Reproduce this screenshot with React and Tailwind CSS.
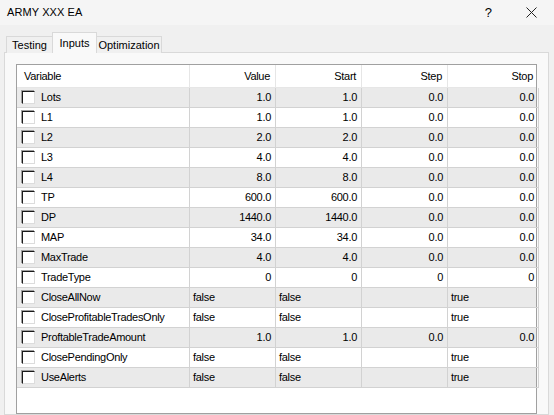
import React from "react";

const rows = [
  ["Lots", "1.0", "1.0", "0.0", "0.0"],
  ["L1", "1.0", "1.0", "0.0", "0.0"],
  ["L2", "2.0", "2.0", "0.0", "0.0"],
  ["L3", "4.0", "4.0", "0.0", "0.0"],
  ["L4", "8.0", "8.0", "0.0", "0.0"],
  ["TP", "600.0", "600.0", "0.0", "0.0"],
  ["DP", "1440.0", "1440.0", "0.0", "0.0"],
  ["MAP", "34.0", "34.0", "0.0", "0.0"],
  ["MaxTrade", "4.0", "4.0", "0.0", "0.0"],
  ["TradeType", "0", "0", "0", "0"],
  ["CloseAllNow", "false", "false", "", "true"],
  ["CloseProfitableTradesOnly", "false", "false", "", "true"],
  ["ProftableTradeAmount", "1.0", "1.0", "0.0", "0.0"],
  ["ClosePendingOnly", "false", "false", "", "true"],
  ["UseAlerts", "false", "false", "", "true"],
];

const isText = (v) => v === "false" || v === "true";

function Check() {
  return (
    <span className="inline-block w-[13px] h-[13px] bg-white border border-t-[#1a1a1a] border-l-[#1a1a1a] border-r-[#dcdcdc] border-b-[#dcdcdc] shadow-[-1px_-1px_0_#a0a0a0]" />
  );
}

export default function App() {
  return (
    <div className="w-[554px] h-[415px] overflow-hidden bg-[#f0f0f0] text-black text-[11px] font-['Liberation_Sans',Arial,sans-serif] flex flex-col">
      {/* title bar */}
      <div className="h-[25px] bg-[#f5f5f5] flex items-center pl-[7px] shrink-0">
        <span className="text-[11px] tracking-[0.1px]">ARMY XXX EA</span>
        <div className="ml-auto flex items-center">
          <span className="text-[13px] mr-[34px]">?</span>
          <svg width="11" height="11" viewBox="0 0 11 11" className="mr-[17px]">
            <path d="M0.5 0.5L10.5 10.5M10.5 0.5L0.5 10.5" stroke="#222" strokeWidth="1" fill="none" />
          </svg>
        </div>
      </div>

      {/* tabs */}
      <div className="mt-[8px] pl-[6px] flex items-end h-[20px] shrink-0 relative z-10 -mb-[1px]">
        <div className="h-[17px] w-[46px] flex items-center justify-center border border-b-0 border-r-0 border-[#d9d9d9] bg-[#f0f0f0]">
          Testing
        </div>
        <div className="h-[21px] w-[45px] flex items-start pt-[2px] justify-center border border-b-0 border-[#d9d9d9] bg-[#f9f9f9] relative z-10">
          Inputs
        </div>
        <div className="h-[17px] w-[65px] flex items-center justify-center border border-b-0 border-l-0 border-[#d9d9d9] bg-[#f0f0f0]">
          Optimization
        </div>
      </div>

      {/* panel */}
      <div className="ml-[4px] mr-[5px] flex-1 border border-[#d9d9d9] bg-[#f9f9f9] pt-[11px] px-[11px] flex flex-col">
        <div className="flex-1 border border-[#a0a0a0] bg-white tracking-[-0.3px]">
          <div className="grid grid-cols-[173px_86px_86px_86px_91px] h-[23px] border-b border-[#e6e6e6]">
            <div className="pl-[7px] flex items-center border-r border-[#e6e6e6]">Variable</div>
            <div className="pr-[5px] flex items-center justify-end border-r border-[#e6e6e6]">Value</div>
            <div className="pr-[5px] flex items-center justify-end border-r border-[#e6e6e6]">Start</div>
            <div className="pr-[5px] flex items-center justify-end border-r border-[#e6e6e6]">Step</div>
            <div className="pr-[6px] flex items-center justify-end">Stop</div>
          </div>
          {rows.map((r, i) => (
            <div
              key={r[0]}
              className={
                "grid grid-cols-[173px_86px_86px_86px_91px] h-[20px] " +
                (i % 2 === 0 ? "bg-[#eaeaea]" : "bg-white")
              }
            >
              <div className="flex items-center pl-[5px] gap-[6px] border-r border-b border-[#d2d2d2]">
                <Check />
                <span>{r[0]}</span>
              </div>
              {r.slice(1).map((v, j) => (
                <div
                  key={j}
                  className={
                    "flex items-center border-r border-b border-[#d2d2d2] " +
                    (isText(v) ? "pl-[3px]" : "justify-end pr-[4px]")
                  }
                >
                  {v}
                </div>
              ))}
            </div>
          ))}
        </div>
      </div>
    </div>
  );
}
